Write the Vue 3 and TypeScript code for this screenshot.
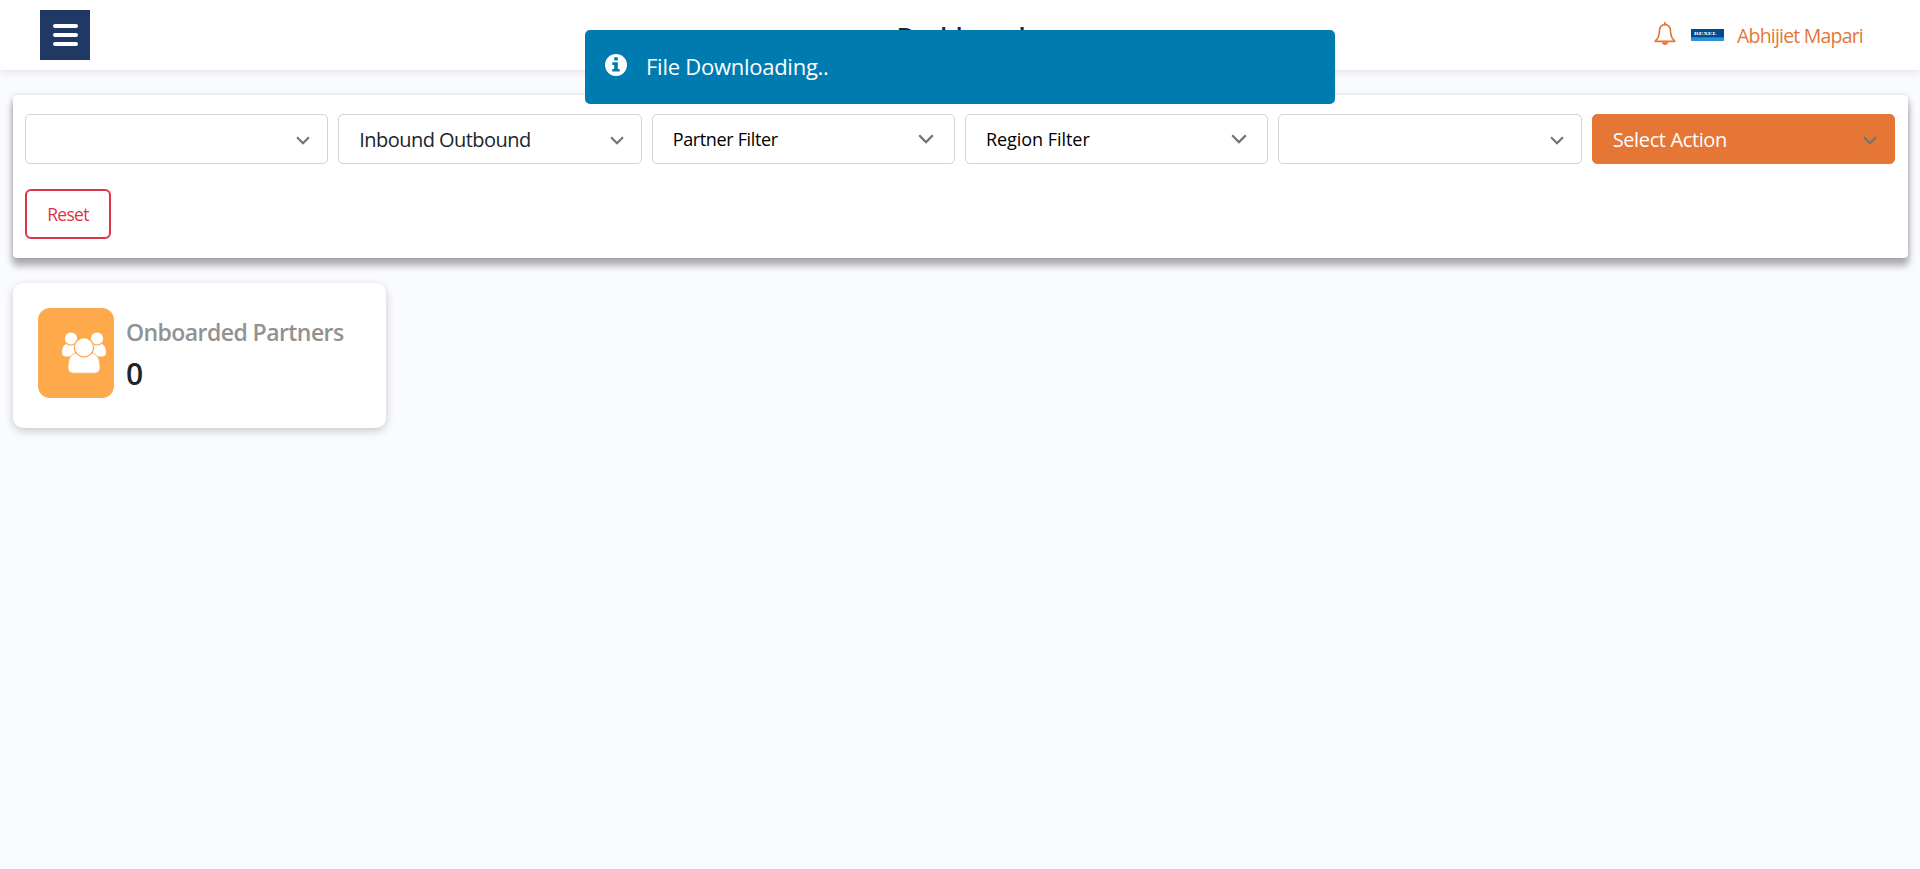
<script setup lang="ts">
interface Filter {
  label: string
  kind: 'empty' | 'select' | 'multi' | 'action'
}

const filters: Filter[] = [
  { label: '', kind: 'empty' },
  { label: 'Inbound Outbound', kind: 'select' },
  { label: 'Partner Filter', kind: 'multi' },
  { label: 'Region Filter', kind: 'multi' },
  { label: '', kind: 'empty' },
  { label: 'Select Action', kind: 'action' },
]

const userName = 'Abhijiet Mapari'
const onboardedPartners = 0
</script>

<template>
  <div class="page">
    <header class="topbar">
      <button class="menu" type="button" aria-label="Menu">
        <span></span><span></span><span></span>
      </button>
      <h1 class="title">Dashboard</h1>
      <div class="account">
        <svg class="bell" viewBox="0 0 22 24" fill="none" stroke="#e67635" stroke-width="1.6">
          <path d="M11 1v1.6" stroke-width="2" stroke-linecap="round" />
          <path d="M11 2.6c-3.6 0-5.3 2.7-5.5 6-.2 3.6-.4 6.300-2.200 8.100-.7.8-1.700 1.500-2.100 2.700h19.600c-.4-1.200-1.400-1.900-2.100-2.700-1.800-1.800-2-4.500-2.200-8.100-.2-3.300-1.900-6-5.500-6z" stroke-linejoin="round" />
          <path d="M7.800 20.300h6.400c-.3 1.700-1.500 2.700-3.200 2.700s-2.900-1-3.200-2.700z" fill="#e67635" stroke="none" />
        </svg>
        <svg class="logo" viewBox="0 0 33 12">
          <rect width="33" height="12" fill="#004a8f" />
          <rect y="8.300" width="33" height="3.700" fill="#2e93d1" />
          <text x="3" y="6" textLength="23" lengthAdjust="spacingAndGlyphs">REXEL</text>
        </svg>
        <span class="user">{{ userName }}</span>
      </div>
    </header>

    <section class="panel">
      <div class="filters">
        <div v-for="(f, i) in filters" :key="i" class="field" :class="f.kind">
          <span class="label">{{ f.label }}</span>
          <svg class="chevron" viewBox="0 0 16 10" fill="none" stroke="#6a737b" stroke-width="2.300">
            <path d="M1.200 1.200 8 8.200l6.800-7" />
          </svg>
        </div>
      </div>
      <button class="reset" type="button">Reset</button>
    </section>

    <section class="card">
      <div class="badge">
        <svg class="people" viewBox="0 0 44 42" fill="#fff">
          <circle cx="9" cy="6.500" r="6.100" />
          <circle cx="35" cy="6.500" r="6.100" />
          <path d="M4.500 12c2.500 2 6.500 2 9 .2-2.200 4.300-1.300 8.300 1.700 11-2.300.3-4 .7-5.500 1.300H4c-2.700 0-4-1.500-4-4 0-3.500 1-7.300 4.500-8.500z" />
          <path d="M39.500 12c-2.500 2-6.500 2-9 .2 2.200 4.300 1.300 8.300-1.700 11 2.300.3 4 .7 5.500 1.300H40c2.700 0 4-1.500 4-4 0-3.500-1-7.300-4.500-8.500z" />
          <path d="M13.700 21.500h16.600C36 22 38 28 38 36c0 3.300-2 5.200-5.300 5.200H11.300C8 41.200 6 39.300 6 36c0-8 2-14 7.700-14.500z" stroke="#ffa94d" stroke-width=".8" />
          <circle cx="22" cy="15.300" r="9.600" stroke="#ffa94d" stroke-width="1.200" />
        </svg>
      </div>
      <div class="stat">
        <h2>Onboarded Partners</h2>
        <strong>{{ onboardedPartners }}</strong>
      </div>
    </section>

    <div class="toast" role="status">
      <svg viewBox="0 0 22 22">
        <circle cx="11" cy="11" r="11" fill="#fff" />
        <path d="M9.200 3.200h3.600v3.200H9.200zM7.300 8.300h5.500v6.600h1.800v2.700H7.300v-2.700h1.900v-3.900H7.300z" fill="#007bb0" />
      </svg>
      <span>File Downloading..</span>
    </div>
  </div>
</template>

<style>
body {
  background: #fafbff;
}
</style>

<style scoped>
.page {
  min-height: 869px;
  box-sizing: border-box;
  overflow: hidden;
  background: #fafbff;
  font-family: "Open Sans", "Noto Sans", sans-serif;
  color: #212529;
}
.topbar {
  height: 70px;
  box-sizing: border-box;
  padding: 0 57px 0 40px;
  display: grid;
  grid-template-columns: 1fr auto 1fr;
  align-items: center;
  background: #fff;
  box-shadow: 0 2px 8px rgba(0, 0, 0, 0.1);
}
.menu {
  width: 50px;
  height: 50px;
  padding: 0 12px 0 13px;
  border: 0;
  background: #203864;
  display: flex;
  flex-direction: column;
  justify-content: center;
  gap: 5px;
}
.menu span {
  height: 4px;
  border-radius: 2px;
  background: #fff;
}
.title {
  margin: 2px 0 0 18px;
  font-size: 26px;
  font-weight: 600;
  line-height: 34px;
  letter-spacing: -1.1px;
}
.account {
  display: flex;
  align-items: center;
  justify-content: flex-end;
}
.bell {
  width: 22px;
  height: 24px;
  margin: 0 15px 3px 0;
}
.logo {
  width: 33px;
  height: 12px;
  margin-right: 13px;
}
.logo text {
  font: bold 5px "Liberation Serif", serif;
  fill: #fff;
}
.user {
  margin-top: 1px;
  color: #e67635;
  font-size: 19.5px;
  line-height: 26px;
  letter-spacing: -0.8px;
}
.panel {
  margin: 25px 12px 0 13px;
  height: 163px;
  box-sizing: border-box;
  padding: 19px 13px 0 12px;
  border-radius: 4px;
  background: #fff;
  box-shadow: 0 7px 7px 1px rgba(0, 0, 0, 0.3), 0 0 5px rgba(0, 0, 0, 0.15);
}
.filters {
  display: grid;
  grid-template-columns: repeat(6, 1fr);
  gap: 10px;
}
.field {
  height: 50px;
  box-sizing: border-box;
  padding: 0 17px 0 20px;
  border: 1px solid #ced4da;
  border-radius: 5px;
  display: flex;
  align-items: center;
  justify-content: space-between;
  font-size: 20px;
  line-height: 28px;
  letter-spacing: -0.55px;
  white-space: nowrap;
}
.label {
  margin-top: 2px;
}
.chevron {
  width: 14px;
  height: 9px;
  margin-top: 3px;
}
.multi {
  padding-right: 20px;
  color: #000;
  font-size: 18px;
  letter-spacing: -0.35px;
}
.multi + .multi {
  letter-spacing: -0.05px;
}
.multi .label {
  margin-top: 0;
}
.multi .chevron {
  width: 16px;
  height: 10px;
  margin-top: 0;
}
.action {
  background: #e67635;
  border-color: #e67635;
  color: #fff;
  letter-spacing: -0.37px;
}
.reset {
  display: block;
  width: 86px;
  height: 50px;
  margin-top: 25px;
  padding: 0;
  border: 2px solid #dc3545;
  border-radius: 6px;
  background: #fff;
  color: #dc3545;
  font: 17.5px "Open Sans", sans-serif;
  letter-spacing: -0.7px;
}
.card {
  width: 373px;
  height: 145px;
  box-sizing: border-box;
  margin: 25px 0 0 13px;
  padding: 25px;
  border-radius: 10px;
  background: #fff;
  box-shadow: 0 3px 10px rgba(0, 0, 0, 0.2);
  display: flex;
  gap: 12px;
}
.badge {
  width: 76px;
  height: 90px;
  box-sizing: border-box;
  padding: 24px 0 0 24px;
  border-radius: 12px;
  background: #ffa94d;
}
.people {
  display: block;
  width: 44px;
  height: 42px;
}
.stat h2 {
  margin: 8px 0 0;
  color: #929292;
  font-size: 23px;
  font-weight: 600;
  line-height: 32px;
  letter-spacing: -0.56px;
  white-space: nowrap;
}
.stat strong {
  display: block;
  margin-top: 8px;
  font-size: 30px;
  font-weight: 600;
  line-height: 36px;
}
.toast {
  position: absolute;
  top: 30px;
  left: 585px;
  width: 750px;
  height: 74px;
  box-sizing: border-box;
  padding: 0 20px;
  border-radius: 5px;
  background: #007bb0;
  color: #fff;
  display: flex;
  align-items: center;
  gap: 19px;
  font-size: 22px;
  letter-spacing: -0.26px;
}
.toast svg {
  width: 22px;
  height: 22px;
  margin-bottom: 4px;
}
.toast span {
  margin-bottom: 2px;
}
</style>
